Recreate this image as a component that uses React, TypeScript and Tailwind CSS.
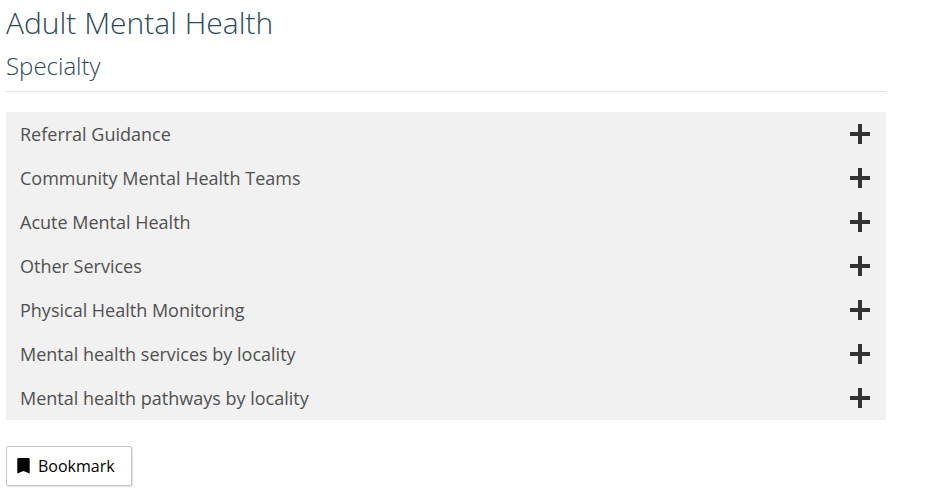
const sections = [
  "Referral Guidance",
  "Community Mental Health Teams",
  "Acute Mental Health",
  "Other Services",
  "Physical Health Monitoring",
  "Mental health services by locality",
  "Mental health pathways by locality",
];

function PlusIcon() {
  return (
    <svg width="20" height="20" viewBox="0 0 20 20" aria-hidden="true" className="shrink-0 fill-[#333]">
      <path d="M8 0h4v8h8v4h-8v8H8v-8H0V8h8z" />
    </svg>
  );
}

function BookmarkIcon() {
  return (
    <svg width="13" height="16" viewBox="0 0 13 16" aria-hidden="true" className="shrink-0 fill-black">
      <path d="M1.500 0h10A1.200 1.200 0 0 1 12.700 1.200V15.500L6.500 12.900L0.300 15.500V1.200A1.200 1.200 0 0 1 1.500 0z" />
    </svg>
  );
}

export default function App() {
  return (
    <main className="pt-1 pr-[45px] pb-4 pl-1.5 font-['Open_Sans',sans-serif]">
      <header className="border-b border-[#e3e3e3] pb-2">
        <h1 className="text-[30px] leading-[38px] font-light text-[#2c4a56]">Adult Mental Health</h1>
        <h2 className="pt-1.5 text-2xl leading-[35px] font-light text-[#2c4a56]">Specialty</h2>
      </header>
      <ul className="mt-5 bg-[#f1f1f1]">
        {sections.map((name) => (
          <li key={name}>
            <button
              type="button"
              aria-expanded="false"
              className="flex h-11 w-full items-center justify-between pr-4 pl-3.5 text-left text-lg text-[#505050]"
            >
              {name}
              <PlusIcon />
            </button>
          </li>
        ))}
      </ul>
      <button
        type="button"
        className="mt-6.5 flex h-10 items-center gap-2 rounded-xs border border-[#c8c8c8] bg-white pr-4 pl-2.5 text-base text-black shadow-[1px_1px_1px_rgba(0,0,0,0.12)]"
      >
        <BookmarkIcon />
        Bookmark
      </button>
    </main>
  );
}
